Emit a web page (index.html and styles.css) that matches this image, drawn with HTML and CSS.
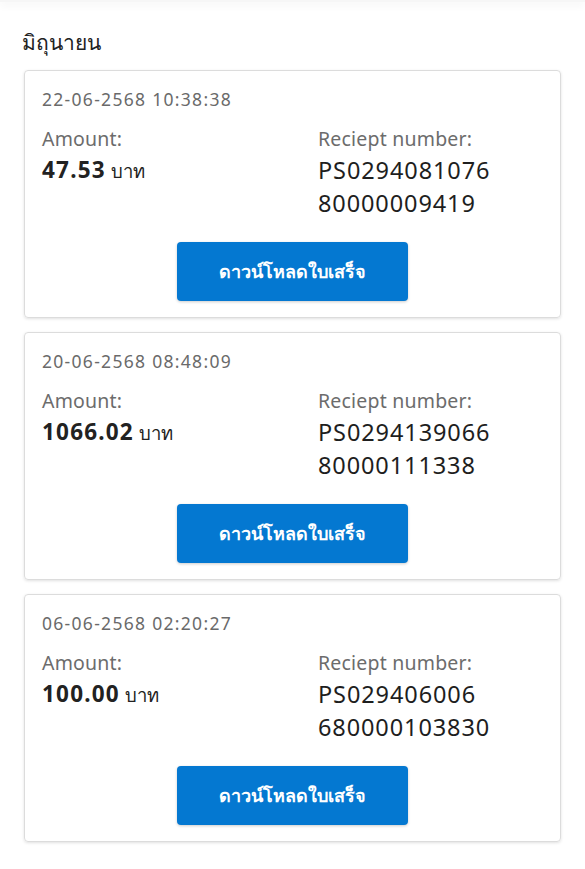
FILE: index.html
```html
<!DOCTYPE html>
<html lang="th">

<head>
    <meta charset="UTF-8">
    <meta name="viewport" content="width=device-width, initial-scale=1.0">
    <title>ใบเสร็จ</title>
    <link rel="stylesheet" href="styles.css">
</head>

<body>
    <div class="topbar"></div>
    <div class="page">
        <h2 class="month">มิถุนายน</h2>

        <div class="card">
            <div class="date">22-06-2568 10:38:38</div>
            <div class="info">
                <div class="col">
                    <div class="label">Amount:</div>
                    <div class="amount"><b>47.53</b> บาท</div>
                </div>
                <div class="col">
                    <div class="label">Reciept number:</div>
                    <div class="number">PS0294081076<br>80000009419</div>
                </div>
            </div>
            <button class="btn">ดาวน์โหลดใบเสร็จ</button>
        </div>

        <div class="card">
            <div class="date">20-06-2568 08:48:09</div>
            <div class="info">
                <div class="col">
                    <div class="label">Amount:</div>
                    <div class="amount"><b>1066.02</b> บาท</div>
                </div>
                <div class="col">
                    <div class="label">Reciept number:</div>
                    <div class="number">PS0294139066<br>80000111338</div>
                </div>
            </div>
            <button class="btn">ดาวน์โหลดใบเสร็จ</button>
        </div>

        <div class="card">
            <div class="date">06-06-2568 02:20:27</div>
            <div class="info">
                <div class="col">
                    <div class="label">Amount:</div>
                    <div class="amount"><b>100.00</b> บาท</div>
                </div>
                <div class="col">
                    <div class="label">Reciept number:</div>
                    <div class="number">PS029406006<br>680000103830</div>
                </div>
            </div>
            <button class="btn">ดาวน์โหลดใบเสร็จ</button>
        </div>
    </div>
</body>

</html>
```

FILE: styles.css
```css
* {
    margin: 0;
    padding: 0;
    box-sizing: border-box;
}

body {
    background: #fff;
    font-family: "Noto Sans", "Open Sans", sans-serif;
    color: #222;
}

/* แถบด้านบน */
.topbar {
    height: 2px;
    background: #f6f6f6;
    box-shadow: 0 2px 8px rgba(0, 0, 0, 0.12);
}

.page {
    padding: 26px 24px 0 24px;
}

.month {
    margin-left: -2px;
    font-size: 21px;
    font-weight: normal;
    line-height: 28px;
    color: #222;
    margin-bottom: 14px;
}

/* การ์ดใบเสร็จ */
.card {
    display: flex;
    flex-direction: column;
    height: 248px;
    padding: 16px 18px 16px 17px;
    margin-bottom: 14px;
    border: 1px solid #dcdcdc;
    border-radius: 4px;
    box-shadow: 0 1px 3px rgba(0, 0, 0, 0.12);
}

.date {
    font-size: 17.5px;
    letter-spacing: 1.3px;
    line-height: 24px;
    color: #6a6a6a;
    margin-bottom: 13px;
}

.info {
    display: grid;
    grid-template-columns: 276px 1fr;
}

.label {
    font-size: 19.5px;
    letter-spacing: 0.2px;
    line-height: 30px;
    color: #6c6c6c;
}

.amount {
    font-size: 18.5px;
    line-height: 32px;
    color: #222;
}

.amount b {
    font-size: 22.5px;
    letter-spacing: 1.2px;
}

.number {
    font-size: 23.5px;
    letter-spacing: 0.9px;
    line-height: 33px;
    color: #1e1e1e;
}

.btn {
    align-self: center;
    width: 231px;
    height: 59px;
    margin-top: 22px;
    border: none;
    border-radius: 4px;
    background: #0478d1;
    color: #fff;
    font-family: inherit;
    font-size: 18px;
    font-weight: bold;
    box-shadow: 0 1px 3px rgba(0, 0, 0, 0.2);
    cursor: pointer;
}
```
